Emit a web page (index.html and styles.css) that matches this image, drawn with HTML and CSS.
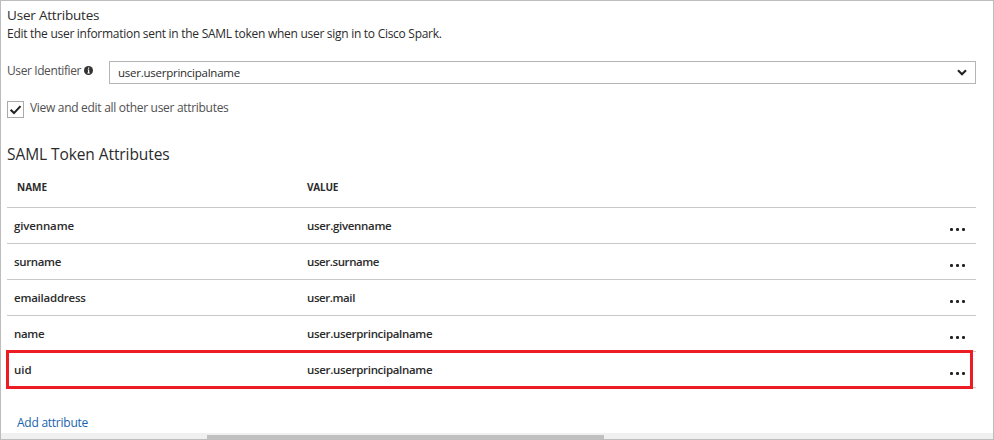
FILE: index.html
```html
<!DOCTYPE html>
<html lang="en">
<head>
<meta charset="utf-8">
<title>User Attributes</title>
<link rel="stylesheet" href="styles.css">
</head>
<body>
<main class="panel">
  <h1 class="title"><span>User Attributes</span></h1>
  <p class="subtitle"><span>Edit the user information sent in the SAML token when user sign in to Cisco Spark.</span></p>
  <div class="field">
    <span class="label">User Identifier</span>
    <svg class="info" viewBox="0 0 9 9"><circle cx="4.5" cy="4.5" r="4.5" fill="#333"/><path d="M4 1.5h1.2v1.2H4zM3.6 3.6h1.6v3h.6v.8H3.4v-.8H4V4.3h-.4z" fill="#fff"/></svg>
    <div class="select"><span class="select-text">user.userprincipalname</span>
      <svg class="chevron" viewBox="0 0 10 7"><path d="M1 1.2l4 4 4-4" fill="none" stroke="#222" stroke-width="2.1"/></svg>
    </div>
  </div>
  <div class="check-row">
    <span class="checkbox"><svg viewBox="0 0 15 15"><path d="M2.6 7.8l3.4 3.3 6.5-7" fill="none" stroke="#222" stroke-width="2.1"/></svg></span>
    <span class="check-label">View and edit all other user attributes</span>
  </div>
  <h2 class="section"><span>SAML Token Attributes</span></h2>
  <div class="table">
    <div class="row head"><span class="name">NAME</span><span class="value">VALUE</span></div>
    <div class="row"><span class="name n1">givenname</span><span class="value v1">user.givenname</span><svg class="dots" viewBox="0 0 15 3"><path d="M0 1.5h3M6 1.5h3M12 1.5h3M1.5 0v3M7.5 0v3M13.5 0v3"/></svg></div>
    <div class="row"><span class="name n2">surname</span><span class="value v2">user.surname</span><svg class="dots" viewBox="0 0 15 3"><path d="M0 1.5h3M6 1.5h3M12 1.5h3M1.5 0v3M7.5 0v3M13.5 0v3"/></svg></div>
    <div class="row"><span class="name n3">emailaddress</span><span class="value v3">user.mail</span><svg class="dots" viewBox="0 0 15 3"><path d="M0 1.5h3M6 1.5h3M12 1.5h3M1.5 0v3M7.5 0v3M13.5 0v3"/></svg></div>
    <div class="row"><span class="name n4">name</span><span class="value v4">user.userprincipalname</span><svg class="dots" viewBox="0 0 15 3"><path d="M0 1.5h3M6 1.5h3M12 1.5h3M1.5 0v3M7.5 0v3M13.5 0v3"/></svg></div>
    <div class="row marked"><span class="name n5">uid</span><span class="value v4">user.userprincipalname</span><svg class="dots" viewBox="0 0 15 3"><path d="M0 1.5h3M6 1.5h3M12 1.5h3M1.5 0v3M7.5 0v3M13.5 0v3"/></svg></div>
  </div>
  <a class="add">Add attribute</a>
  <div class="scrollbar"><div class="thumb"></div></div>
</main>
</body>
</html>
```
FILE: styles.css
```css
*, *::after { box-sizing: border-box; }
body { margin: 0; background: #fff; }
.panel {
  width: 994px; height: 440px; border: 1px solid #bdbdbd;
  padding: 6px 17px 0 6px; display: flex; flex-direction: column;
  font: 12px/18px "Open Sans", "Noto Sans", sans-serif; color: #2b2b2b;
  white-space: nowrap; overflow: hidden;
}
h1, h2, p { margin: 0; font-weight: 400; }
.title { font-size: 13.5px; line-height: 17px; height: 18px; letter-spacing: -0.2px; }
.subtitle { height: 18px; line-height: 17px; letter-spacing: -0.28px; }
.field { display: flex; height: 23px; margin-top: 18px; }
.label { width: 77px; line-height: 20px; color: #505050; letter-spacing: -0.4px; }
.info { width: 9px; height: 9px; margin-top: 5px; }
.select {
  margin-left: 16px; flex: 1; border: 1px solid #b5b5b5;
  display: flex; align-items: center; justify-content: space-between;
  padding: 0 8px; line-height: 21px;
}
.select-text { font-size: 11.5px; letter-spacing: -0.25px; }
.chevron { width: 10px; height: 7px; }
.check-row { display: flex; height: 17px; margin-top: 17px; }
.checkbox { width: 17px; height: 17px; border: 1px solid #aaa; }
.checkbox svg { display: block; width: 15px; height: 15px; }
.check-label { margin-left: 6px; line-height: 14px; color: #505050; letter-spacing: -0.3px; }
.section { margin-top: 25px; font-size: 15.5px; line-height: 22px; height: 22px; letter-spacing: -0.08px; }
.table { margin-top: 9px; }
.row {
  position: relative; display: grid; grid-template-columns: 293px 1fr 19px;
  height: 36px; padding: 0 7px; border-bottom: 1px solid #c8c8c8;
  font-size: 11.5px; font-weight: 600; line-height: 36px;
}
.head { height: 34px; font-size: 10px; font-weight: 700; line-height: 26px; }
.head .name { padding-left: 3px; }
.head .value { letter-spacing: -0.2px; }
.n1 { letter-spacing: -0.14px; }
.n2, .n4 { letter-spacing: -0.35px; }
.n3 { letter-spacing: -0.23px; }
.v1, .v4 { letter-spacing: -0.32px; }
.v2, .v3 { letter-spacing: -0.42px; }
.dots { width: 15px; height: 3px; margin-top: 20px; stroke: #222; stroke-width: 1.8; }
.marked::after {
  content: ""; position: absolute; left: -1px; top: -2px; width: 967px; height: 39px;
  border: 3px solid #ed1c24;
}
.add { margin: 26px 0 0 10px; line-height: 18px; color: #1763ad; letter-spacing: -0.25px; }
.scrollbar { margin: auto -17px 0 -6px; height: 6px; background: #f0f0f0; padding: 2px 0 0 206px; }
.thumb { width: 397px; height: 4px; background: #c0c0c0; }
```
